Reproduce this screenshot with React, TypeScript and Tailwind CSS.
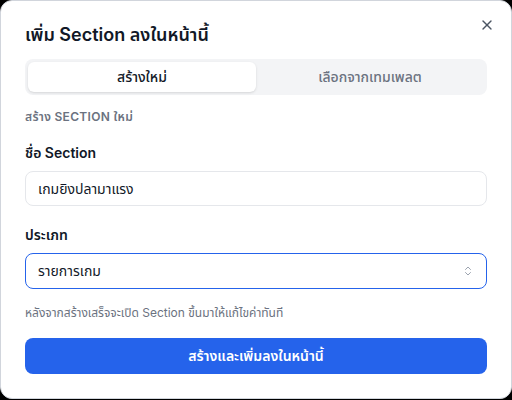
import { X, ChevronsUpDown } from 'lucide-react';

const font = { fontFamily: 'Inter, "Noto Sans Thai", "Noto Sans", sans-serif' };

export default function App() {
  return (
    <div className="w-[512px] h-[400px] bg-black" style={font}>
      <div className="relative w-[512px] h-[399px] bg-white border border-gray-300 rounded-xl px-6 pt-5">
        <button className="absolute right-4 top-4 text-[#4b5563]" aria-label="Close">
          <X className="w-4 h-4" strokeWidth={2} />
        </button>

        <h2 className="text-lg font-semibold text-[#111827] leading-7">เพิ่ม Section ลงในหน้านี้</h2>

        <div className="mt-[10px] h-9 bg-[#f3f4f6] rounded-lg p-[3px] grid grid-cols-2">
          <button className="bg-white rounded-md shadow-sm text-sm font-medium text-[#111827]">
            สร้างใหม่
          </button>
          <button className="rounded-md text-sm font-medium text-[#6b7280]">เลือกจากเทมเพลต</button>
        </div>

        <p className="mt-3 text-xs font-semibold text-[#6b7280] uppercase tracking-wide leading-5">
          สร้าง Section ใหม่
        </p>

        <label className="block mt-4 text-sm font-semibold text-[#111827] leading-5">ชื่อ Section</label>
        <div className="mt-2 h-[35px] border border-[#e5e7eb] rounded-lg px-3 flex items-center text-sm text-[#111827]">
          เกมยิงปลามาแรง
        </div>

        <label className="block mt-[19px] text-sm font-semibold text-[#111827] leading-5">ประเภท</label>
        <div className="mt-2 h-9 border border-[#2563eb] rounded-lg px-3 flex items-center justify-between text-sm text-[#111827]">
          <span>รายการเกม</span>
          <ChevronsUpDown className="w-3 h-3 text-[#9ca3af]" />
        </div>

        <p className="mt-4 text-xs text-[#6b7280] leading-4">
          หลังจากสร้างเสร็จจะเปิด Section ขึ้นมาให้แก้ไขค่าทันที
        </p>

        <button className="mt-[17px] w-full h-9 bg-[#2563eb] rounded-lg text-white text-sm font-semibold">
          สร้างและเพิ่มลงในหน้านี้
        </button>
      </div>
    </div>
  );
}
